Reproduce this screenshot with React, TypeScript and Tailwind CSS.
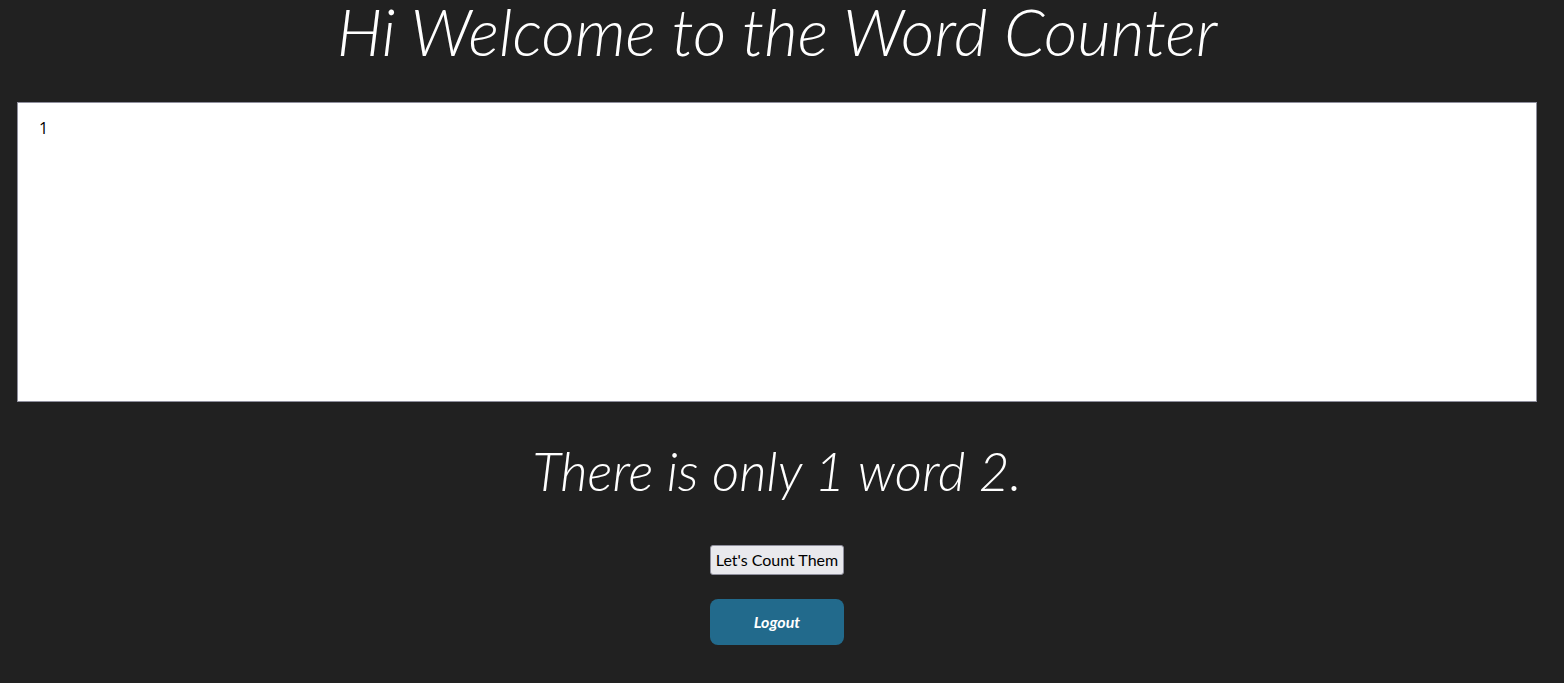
import { useState } from 'react'

export default function App() {
  const [text, setText] = useState('1')

  return (
    <div className="min-h-[683px] pr-[10px] bg-[#212121] font-['Lato','Open_Sans',sans-serif] flex flex-col items-center">
      <h1 className="text-white text-[65px] font-light italic leading-[58px] pt-[2px] h-[68px]">
        Hi Welcome to the Word Counter
      </h1>

      <textarea
        value={text}
        onChange={(e) => setText(e.target.value)}
        className="mt-[34px] w-[1520px] h-[300px] bg-white text-black font-['Open_Sans',sans-serif] text-base px-[21px] py-[13px] border border-[#8f8f9d] resize-none outline-none"
      />

      <h2 className="mt-[38px] text-white text-[53px] font-light italic leading-[62px]">
        There is only 1 word 2.
      </h2>

      <button className="mt-[43px] bg-[#e9e9ed] text-black text-base leading-[20px] px-[5px] py-[4px] border border-[#8f8f9d] rounded-[3px]">
        Let's Count Them
      </button>

      <button className="mt-[24px] w-[134px] h-[46px] bg-[#226a8c] text-white text-base font-bold italic rounded-lg">
        Logout
      </button>
    </div>
  )
}
